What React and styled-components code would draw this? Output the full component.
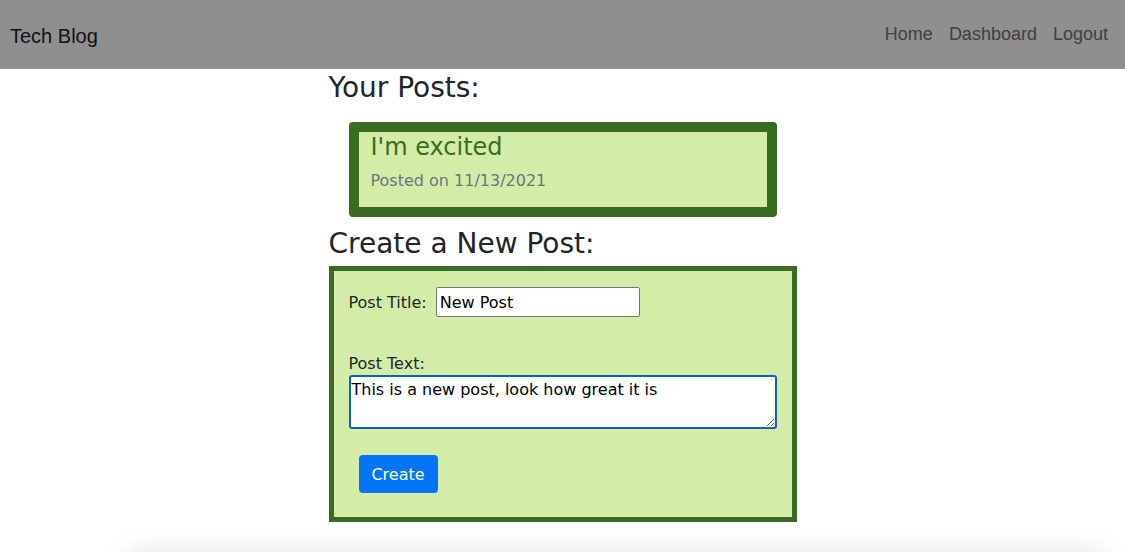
import React from "react";
import styled, { createGlobalStyle } from "styled-components";

const Global = createGlobalStyle`
  html, body { margin: 0; padding: 0; background: #fff; }
  body { font-family: "DejaVu Sans", Verdana, sans-serif; color: #212529; overflow: hidden; }
  * { box-sizing: border-box; }
`;

const Header = styled.header`
  height: 69px;
  background: #8f8f8f;
  display: flex;
  align-items: center;
  justify-content: space-between;
  padding: 0 17px 0 10px;
  font-family: "Liberation Sans", Arial, sans-serif;
`;

const Brand = styled.a`
  font-size: 20px;
  color: #111;
  text-decoration: none;
  margin-top: 3px;
`;

const Nav = styled.nav`
  display: flex;
  gap: 16px;
`;

const NavLink = styled.a`
  font-size: 18px;
  color: #404040;
  text-decoration: none;
`;

const Main = styled.main`
  width: 468px;
  margin: 0 auto;
`;

const Heading = styled.h3`
  font-size: 28px;
  font-weight: 400;
  line-height: 1.2;
  margin: ${(p) => p.$top || 0}px 0 6px;
  color: #212529;
`;

const PostCard = styled.div`
  margin: 17px 20px 0;
  height: 95px;
  border: 10px solid #3a6b22;
  border-radius: 4px;
  background: #d3eda9;
  padding: 1px 12px;
`;

const PostTitle = styled.h4`
  margin: 0;
  font-size: 24px;
  font-weight: 400;
  line-height: 1.2;
  color: #3a6b22;
`;

const PostDate = styled.p`
  margin: 10px 0 0;
  font-size: 16px;
  color: #6c757d;
`;

const FormBox = styled.form`
  border: 5px solid #3a6b22;
  background: #d3eda9;
  padding: 16px 15px 25px 15px;
  height: 256px;
`;

const Row = styled.div`
  display: flex;
  align-items: center;
  gap: 9px;
`;

const Label = styled.label`
  font-size: 16px;
  color: #212529;
  display: block;
`;

const TitleInput = styled.input`
  width: 204px;
  height: 30px;
  border: 1px solid #767676;
  border-radius: 2px;
  padding: 1px 3px;
  font-family: "DejaVu Sans", Verdana, sans-serif;
  font-size: 16px;
  color: #000;
  background: #fff;
`;

const TextBlock = styled.div`
  margin-top: 37px;
`;

const TextArea = styled.textarea`
  display: block;
  width: 428px;
  height: 54px;
  margin-top: 2px;
  border: 2px solid #0b5fc6;
  border-radius: 3px;
  padding: 3px 1px 2px;
  font-family: "DejaVu Sans", Verdana, sans-serif;
  font-size: 16px;
  color: #000;
  background: #fff;
  resize: vertical;
  outline: none;
`;

const Button = styled.button`
  margin: 26px 0 0 10px;
  width: 79px;
  height: 38px;
  background: #0275f6;
  color: #fff;
  border: none;
  border-radius: 4px;
  font-family: "DejaVu Sans", Verdana, sans-serif;
  font-size: 16px;
`;

const Footer = styled.footer`
  height: 60px;
  margin: 34px 20px 0 130px;
  box-shadow: 0 0 30px rgba(0, 0, 0, 0.16);
`;

export default function App() {
  return (
    <>
      <Global />
      <Header>
        <Brand href="#">Tech Blog</Brand>
        <Nav>
          <NavLink href="#">Home</NavLink>
          <NavLink href="#">Dashboard</NavLink>
          <NavLink href="#">Logout</NavLink>
        </Nav>
      </Header>
      <Main>
        <Heading $top={2}>Your Posts:</Heading>
        <PostCard>
          <PostTitle>I'm excited</PostTitle>
          <PostDate>Posted on 11/13/2021</PostDate>
        </PostCard>
        <Heading $top={10}>Create a New Post:</Heading>
        <FormBox onSubmit={(e) => e.preventDefault()}>
          <Row>
            <Label htmlFor="title">Post Title:</Label>
            <TitleInput id="title" defaultValue="New Post" />
          </Row>
          <TextBlock>
            <Label htmlFor="body">Post Text:</Label>
            <TextArea id="body" defaultValue="This is a new post, look how great it is" />
          </TextBlock>
          <Button type="submit">Create</Button>
        </FormBox>
      </Main>
      <Footer />
    </>
  );
}
